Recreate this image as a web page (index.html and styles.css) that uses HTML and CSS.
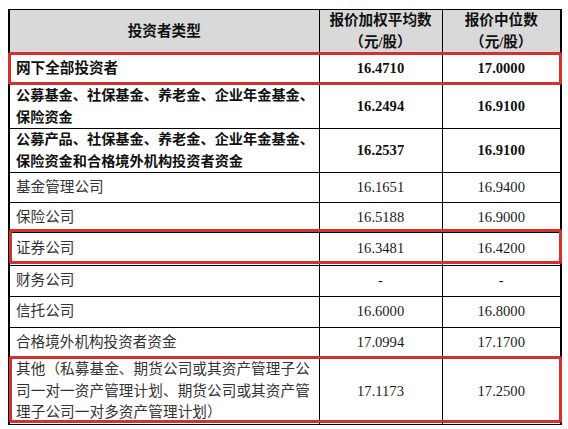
FILE: index.html
```html
<!DOCTYPE html>
<html lang="zh-CN">
<head>
<meta charset="utf-8">
<link rel="stylesheet" href="styles.css">
</head>
<body>
<div class="sheet">
  <table class="quote-table">
    <colgroup>
      <col class="c-type">
      <col class="c-avg">
      <col class="c-mid">
    </colgroup>
    <thead>
      <tr class="head">
        <th>投资者类型</th>
        <th>报价加权平均数<br>（元/股）</th>
        <th>报价中位数<br>（元/股）</th>
      </tr>
    </thead>
    <tbody>
      <tr class="bold"><td class="name">网下全部投资者</td><td>16.4710</td><td>17.0000</td></tr>
      <tr class="bold two"><td class="name">公募基金、社保基金、养老金、企业年金基金、<br>保险资金</td><td>16.2494</td><td>16.9100</td></tr>
      <tr class="bold two"><td class="name">公募产品、社保基金、养老金、企业年金基金、<br>保险资金和合格境外机构投资者资金</td><td>16.2537</td><td>16.9100</td></tr>
      <tr class="r30"><td class="name">基金管理公司</td><td>16.1651</td><td>16.9400</td></tr>
      <tr class="r30"><td class="name">保险公司</td><td>16.5188</td><td>16.9000</td></tr>
      <tr class="r33"><td class="name">证券公司</td><td>16.3481</td><td>16.4200</td></tr>
      <tr><td class="name">财务公司</td><td>-</td><td>-</td></tr>
      <tr><td class="name">信托公司</td><td>16.6000</td><td>16.8000</td></tr>
      <tr><td class="name">合格境外机构投资者资金</td><td>17.0994</td><td>17.1700</td></tr>
      <tr class="three"><td class="name">其他（私募基金、期货公司或其资产管理子公司一对一资产管理计划、期货公司或其资产管理子公司一对多资产管理计划）</td><td>17.1173</td><td>17.2500</td></tr>
    </tbody>
  </table>
  <div class="mark mark-all"></div>
  <div class="mark mark-sec"></div>
  <div class="mark mark-other"></div>
</div>
</body>
</html>
```

FILE: styles.css
```css
html, body {
  margin: 0;
  padding: 0;
  background: #ffffff;
}

body {
  font-family: "Liberation Serif", "Noto Sans CJK SC", serif;
  font-size: 14.6px;
  color: #1a1a1a;
}

.sheet {
  position: relative;
  width: 568px;
  height: 429px;
  padding: 9px 0 0 8px;
  box-sizing: border-box;
}

.quote-table {
  border-collapse: collapse;
  table-layout: fixed;
  width: 552px;
  border-top: 1px solid #000;
  border-left: 2px solid #000;
  border-right: 2px solid #000;
}

.c-type { width: 310px; }
.c-avg { width: 123px; }
.c-mid { width: 119px; }

.quote-table th,
.quote-table td {
  border: 1px solid #000;
  padding: 0;
  text-align: center;
  vertical-align: middle;
  line-height: 21.5px;
  height: 31px;
  box-sizing: border-box;
}

.quote-table th {
  background: #d9d9d9;
  font-weight: bold;
  height: 43px;
  color: #111;
}

.quote-table td.name {
  text-align: left;
  padding-left: 6px;
  padding-right: 2px;
  color: #333;
}

.quote-table tr.bold td {
  font-weight: bold;
  color: #111;
}

.quote-table tr.bold td.name {
  color: #111;
  white-space: nowrap;
  padding-right: 0;
}

.quote-table tr.two td.name {
  font-size: 14.2px;
}

.quote-table tr.two td { height: 44px; }
.quote-table tr.r30 td { height: 30px; }
.quote-table tr.r33 td { height: 33px; }
.quote-table tr.three td { height: 65px; }
.quote-table tr.three td.name { letter-spacing: 0.1px; }

.mark {
  position: absolute;
  border: 3px solid #d3322b;
  border-radius: 2px;
  box-sizing: border-box;
  pointer-events: none;
}

.mark-all {
  left: 8px;
  top: 52px;
  width: 554px;
  height: 33px;
}

.mark-sec {
  left: 9px;
  top: 229px;
  width: 553px;
  height: 35px;
}

.mark-other {
  left: 9px;
  top: 356px;
  width: 553px;
  height: 67px;
}
```
